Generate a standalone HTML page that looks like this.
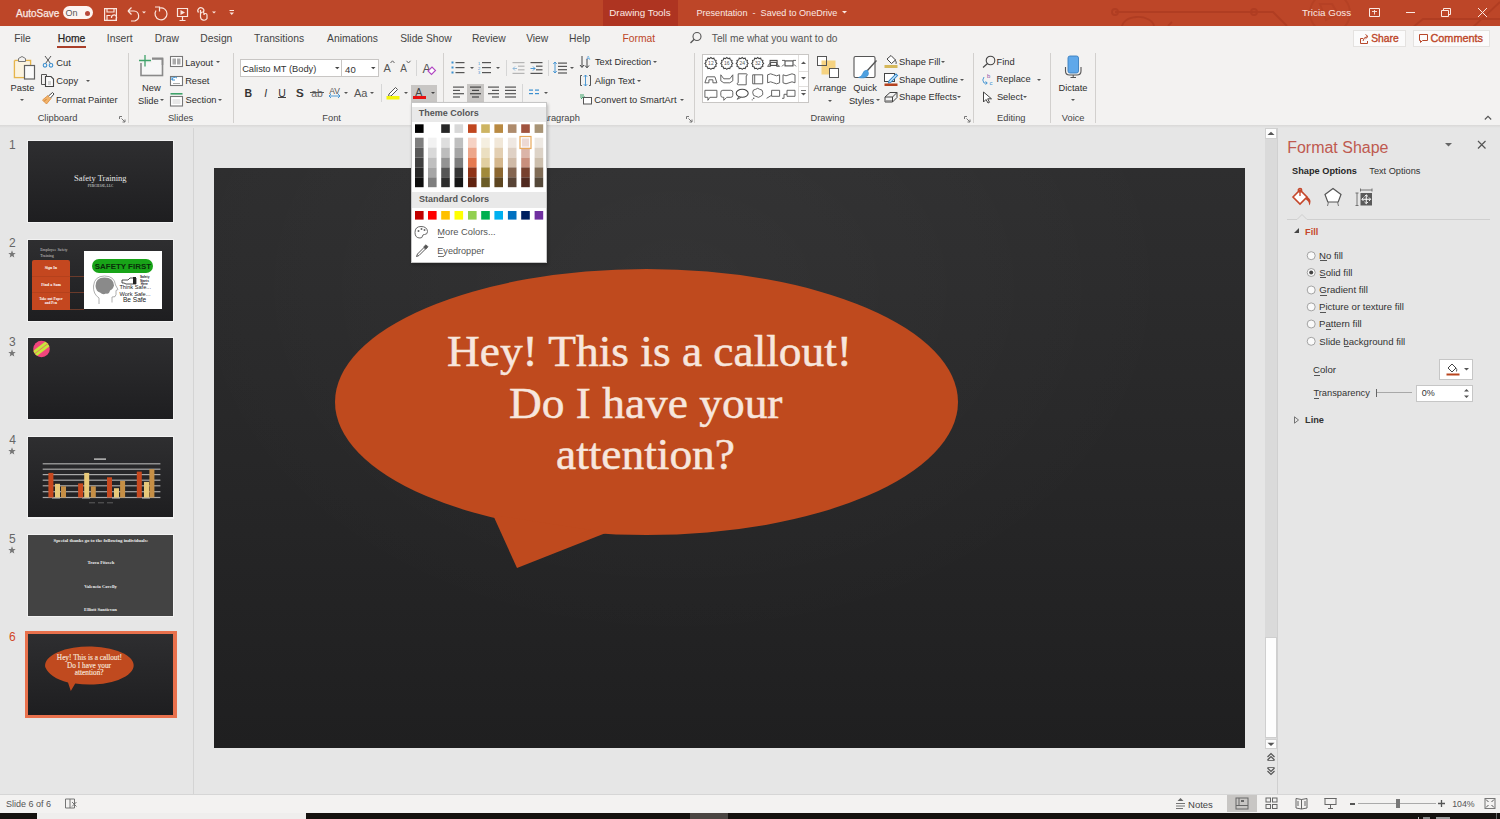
<!DOCTYPE html>
<html><head><meta charset="utf-8">
<style>
*{margin:0;padding:0;box-sizing:border-box}
html,body{width:1500px;height:819px;overflow:hidden;background:#e6e6e6;font-family:"Liberation Sans",sans-serif;color:#444}
.a{position:absolute}
.t{position:absolute;white-space:nowrap;line-height:1}
svg{overflow:visible}
</style></head><body>
<div class="a" style="left:0px;top:0px;width:1500px;height:26px;background:#bd4628;"></div>
<div class="a" style="left:0px;top:26px;width:1500px;height:99px;background:#f3f2f1;"></div>
<div class="a" style="left:0px;top:125px;width:1500px;height:3px;background:linear-gradient(#d9d8d7,#e6e6e6);"></div>
<svg class="a" style="left:1080px;top:0px;overflow:hidden" width="420" height="26" viewBox="0 0 420 26"><g stroke="#ab3a20" stroke-width="1.8" fill="none" opacity="0.7">
  <path d="M35 12 H193 L207 26"/><circle cx="35" cy="12" r="3"/><circle cx="174" cy="12" r="3"/>
  <path d="M42 28 a16 10 0 0 1 32 -2"/><path d="M88 26 L92 22"/>
  <circle cx="250" cy="13" r="20" opacity="0.6"/><path d="M240 4 L252 4 L258 14 L246 20 Z" opacity="0.5"/>
  <path d="M332 28 L343 19 H420"/><path d="M392 28 L420 2"/>
 </g></svg>
<div class="t" style="left:16.02px;top:8.74px;font-size:10.00px;color:#fbe9e3;-webkit-text-stroke:0.25px #fbe9e3;">AutoSave</div>
<div class="a" style="left:63px;top:6px;width:30px;height:13px;background:#fdf4f1;border-radius:7px;"></div>
<div class="t" style="left:65.58px;top:8.89px;font-size:9.00px;color:#555;">On</div>
<div class="a" style="left:84.5px;top:11px;width:5.0px;height:5px;background:#b8483a;border-radius:3px;"></div>
<svg class="a" style="left:100px;top:4px;" width="140" height="20" viewBox="0 0 140 20"><g stroke="#fbe6de" stroke-width="1.2" fill="none">
  <path d="M4.6 4.6 H16.4 V16.4 H4.6 Z"/><path d="M7 4.6 V8 H14 V4.6"/><path d="M7 16.4 V11.5 H10.5"/>
  <path d="M11.5 14 a2.6 2.6 0 1 1 4.2 1.6"/>
  <path d="M28 7 L31.5 3.5 M28 7 L31.5 10.5 M28 7 H34 a5 5 0 0 1 1 9.8 L31 17"/>
  <path d="M56 6.5 a6 6 0 1 0 3.5 -2.5"/><path d="M55 3 H59.5 V7.5"/>
  <path d="M77.5 4.5 H87.5 V12.5 H77.5 Z M82.5 12.5 V16.5 M79.5 16.5 H85.5"/>
  <path d="M98.5 8.5 a3 3 0 1 1 5 -0.5 M100.5 6 V13 M100.5 13 a3.5 3.5 0 0 0 6.5 1.5 V11 a1.5 1.5 0 0 0 -3 0 V9.5 a1.5 1.5 0 0 0 -3 0"/>
 </g>
 <path d="M80.5 6 L85 8.5 L80.5 11 Z" fill="#fbe6de"/>
 <path d="M42 7.5 H46 L44 9.5 Z M112 7.5 H116 L114 9.5 Z" fill="#fbe6de"/>
 <path d="M129.5 6.5 H134" stroke="#fbe6de" stroke-width="1"/><path d="M129.5 8.5 H134 L131.75 11 Z" fill="#fbe6de"/></svg>
<div class="a" style="left:603px;top:0px;width:75px;height:26px;background:#ae3421;"></div>
<div class="t" style="left:609.31px;top:8.01px;font-size:9.80px;color:#fbe9e3;">Drawing Tools</div>
<div class="t" style="left:696.42px;top:8.60px;font-size:9.10px;color:#fbe9e3;white-space:pre;">Presentation  -  Saved to OneDrive</div>
<svg class="a" style="left:841.5px;top:10.8px" width="5" height="3.0"><path d="M0 0 H5 L2.5 2.5 Z" fill="#fbe9e3"/></svg>
<div class="t" style="left:1301.98px;top:8.01px;font-size:9.80px;color:#fbe9e3;">Tricia Goss</div>
<svg class="a" style="left:1360px;top:0px;" width="140" height="26" viewBox="0 0 140 26"><g stroke="#fbe9e3" stroke-width="1" fill="none">
  <path d="M9.5 8.5 H19.5 V16.5 H9.5 Z"/><path d="M12 11.5 H17 M14.5 10 V14.5" stroke-width="0.9"/>
  <path d="M46 12.5 H55"/>
  <path d="M81.5 10.5 H88.5 V16.5 H81.5 Z M83.5 10.5 V8.5 H90.5 V14.5 H88.5"/>
  <path d="M118 8 L127 17 M127 8 L118 17"/>
 </g></svg>
<div class="t" style="left:14.20px;top:34.49px;font-size:10.30px;color:#444;">File</div>
<div class="t" style="left:106.84px;top:34.49px;font-size:10.30px;color:#444;">Insert</div>
<div class="t" style="left:154.81px;top:34.49px;font-size:10.30px;color:#444;">Draw</div>
<div class="t" style="left:200.31px;top:34.49px;font-size:10.30px;color:#444;">Design</div>
<div class="t" style="left:254.07px;top:34.49px;font-size:10.30px;color:#444;">Transitions</div>
<div class="t" style="left:327.06px;top:34.49px;font-size:10.30px;color:#444;">Animations</div>
<div class="t" style="left:400.19px;top:34.49px;font-size:10.30px;color:#444;">Slide Show</div>
<div class="t" style="left:471.90px;top:34.49px;font-size:10.30px;color:#444;">Review</div>
<div class="t" style="left:526.15px;top:34.49px;font-size:10.30px;color:#444;">View</div>
<div class="t" style="left:569.06px;top:34.49px;font-size:10.30px;color:#444;">Help</div>
<div class="t" style="left:57.77px;top:34.49px;font-size:10.30px;color:#262626;-webkit-text-stroke:0.25px #262626;">Home</div>
<div class="a" style="left:57px;top:46px;width:29px;height:2px;background:#a93f2a;"></div>
<div class="t" style="left:622.46px;top:34.49px;font-size:10.30px;color:#bd4628;">Format</div>
<svg class="a" style="left:689px;top:31px;" width="14" height="14" viewBox="0 0 14 14"><circle cx="8" cy="5.5" r="4" stroke="#555" fill="none" stroke-width="1.1"/><path d="M5.2 8.3 L1.5 12" stroke="#555" stroke-width="1.3"/></svg>
<div class="t" style="left:711.82px;top:34.37px;font-size:10.20px;color:#555;">Tell me what you want to do</div>
<div class="a" style="left:1353px;top:30px;width:53px;height:17px;background:#fbfbfb;border:1px solid #e4e2e0;"></div>
<svg class="a" style="left:1358px;top:32px;" width="13" height="14" viewBox="0 0 13 14"><path d="M5 6.5 H2.5 V11.5 H9.5 V9" stroke="#b7472a" fill="none"/><path d="M5 9 Q5.5 5 9.5 4.5 M7.5 2.5 L10 4.5 L7.5 6.8" stroke="#b7472a" fill="none"/></svg>
<div class="t" style="left:1371.24px;top:33.58px;font-size:10.31px;color:#bd4628;-webkit-text-stroke:0.35px #bd4628;">Share</div>
<div class="a" style="left:1413px;top:30px;width:77px;height:17px;background:#fbfbfb;border:1px solid #e4e2e0;"></div>
<svg class="a" style="left:1418px;top:33px;" width="12" height="12" viewBox="0 0 12 12"><path d="M1.5 1.5 H9.5 V7.5 H4.5 L2.5 9.5 V7.5 H1.5 Z" stroke="#b7472a" fill="none"/></svg>
<div class="t" style="left:1430.46px;top:33.09px;font-size:10.88px;color:#bd4628;-webkit-text-stroke:0.35px #bd4628;">Comments</div>
<div class="a" style="left:128px;top:53px;width:1px;height:70px;background:#d2d0ce;"></div>
<div class="a" style="left:233px;top:53px;width:1px;height:70px;background:#d2d0ce;"></div>
<div class="a" style="left:443px;top:53px;width:1px;height:70px;background:#d2d0ce;"></div>
<div class="a" style="left:694px;top:53px;width:1px;height:70px;background:#d2d0ce;"></div>
<div class="a" style="left:973px;top:53px;width:1px;height:70px;background:#d2d0ce;"></div>
<div class="a" style="left:1050px;top:53px;width:1px;height:70px;background:#d2d0ce;"></div>
<div class="a" style="left:1095px;top:53px;width:1px;height:70px;background:#d2d0ce;"></div>
<div class="t" style="left:37.67px;top:114.13px;font-size:9.30px;color:#454545;">Clipboard</div>
<div class="t" style="left:167.88px;top:114.13px;font-size:9.30px;color:#454545;">Slides</div>
<div class="t" style="left:322.35px;top:114.13px;font-size:9.30px;color:#454545;">Font</div>
<div class="t" style="left:810.49px;top:114.13px;font-size:9.30px;color:#454545;">Drawing</div>
<div class="t" style="left:997.07px;top:114.13px;font-size:9.30px;color:#454545;">Editing</div>
<div class="t" style="left:1061.79px;top:114.13px;font-size:9.30px;color:#454545;">Voice</div>
<div class="t" style="left:536.46px;top:114.13px;font-size:9.30px;color:#454545;">Paragraph</div>
<svg class="a" style="left:119px;top:116px;" width="7" height="7" viewBox="0 0 7 7"><path d="M0.5 0.5 H3 M0.5 0.5 V3 M2.5 2.5 L6 6 M6 3.5 V6 H3.5" stroke="#777" stroke-width="1" fill="none"/></svg>
<svg class="a" style="left:686px;top:116px;" width="7" height="7" viewBox="0 0 7 7"><path d="M0.5 0.5 H3 M0.5 0.5 V3 M2.5 2.5 L6 6 M6 3.5 V6 H3.5" stroke="#777" stroke-width="1" fill="none"/></svg>
<svg class="a" style="left:964px;top:116px;" width="7" height="7" viewBox="0 0 7 7"><path d="M0.5 0.5 H3 M0.5 0.5 V3 M2.5 2.5 L6 6 M6 3.5 V6 H3.5" stroke="#777" stroke-width="1" fill="none"/></svg>
<svg class="a" style="left:10px;top:54px;" width="28" height="28" viewBox="0 0 28 28"><path d="M4.5 6.5 H8 M16 6.5 H20.5 V12" stroke="#e6b54a" stroke-width="1.5" fill="none"/>
<path d="M4.5 6.5 V23.5 H14" stroke="#e6b54a" stroke-width="1.5" fill="none"/>
<rect x="5.3" y="7.3" width="14.4" height="15.5" fill="#fbf3df"/>
<path d="M8.5 7.5 V4.5 L12 2.5 L15.5 4.5 V7.5 Z" fill="#f3f2f1" stroke="#777" stroke-width="1"/>
<rect x="14.5" y="11.5" width="10" height="13.5" fill="#fafafa" stroke="#606060" stroke-width="1.2"/></svg>
<div class="t" style="left:10.58px;top:84.13px;font-size:9.30px;color:#2e2e2e;">Paste</div>
<svg class="a" style="left:20.3px;top:99.0px" width="4" height="2.5"><path d="M0 0 H4 L2.0 2.0 Z" fill="#555"/></svg>
<svg class="a" style="left:42px;top:55px;" width="12" height="13" viewBox="0 0 12 13"><path d="M3 1 L8.5 8.5 M9 1 L3.5 8.5" stroke="#555" stroke-width="1"/><circle cx="3" cy="10.3" r="1.8" stroke="#3a8fd0" fill="none" stroke-width="1.1"/><circle cx="9" cy="10.3" r="1.8" stroke="#3a8fd0" fill="none" stroke-width="1.1"/></svg>
<div class="t" style="left:56.33px;top:58.53px;font-size:9.30px;color:#2e2e2e;">Cut</div>
<svg class="a" style="left:40px;top:73px;" width="16" height="15" viewBox="0 0 16 15"><path d="M6.5 3.5 V1.5 H1.5 V11.5 H5" stroke="#555" fill="none" stroke-width="1"/><path d="M5.5 3.5 H11 L13.5 6 V13.5 H5.5 Z" stroke="#444" fill="#fafafa" stroke-width="1.1"/><path d="M8 9 H11 M8 11 H11" stroke="#999" stroke-width="0.8"/></svg>
<div class="t" style="left:56.33px;top:76.83px;font-size:9.30px;color:#2e2e2e;">Copy</div>
<svg class="a" style="left:86.0px;top:79.7px" width="4" height="2.5"><path d="M0 0 H4 L2.0 2.0 Z" fill="#555"/></svg>
<svg class="a" style="left:41px;top:92px;" width="14" height="13" viewBox="0 0 14 13"><path d="M1.5 8 L7 3.5 L10 6.5 L5.5 12 Z" fill="#f2b36a" stroke="#d9893a" stroke-width="0.8"/><path d="M7.5 4 L11.5 0.5 L13 2 L9.5 6" fill="#fff" stroke="#444" stroke-width="1"/><path d="M3 9.5 L5.5 7" stroke="#c06a1a" stroke-width="0.7"/></svg>
<div class="t" style="left:56.06px;top:95.83px;font-size:9.30px;color:#2e2e2e;">Format Painter</div>
<svg class="a" style="left:136px;top:53px;" width="30" height="25" viewBox="0 0 30 25"><rect x="5" y="6" width="21.5" height="16.5" fill="#f7f7f7" stroke="#8a8a8a" stroke-width="1.6"/>
<rect x="4" y="4" width="12" height="6" fill="#f3f2f1"/>
<path d="M9 2 V13.5 M3 7.5 H15" stroke="#3fa26a" stroke-width="1.3"/>
<path d="M16 5.2 H26.5 V12" stroke="#8a8a8a" stroke-width="1.6" fill="none"/></svg>
<div class="t" style="left:142.10px;top:84.13px;font-size:9.30px;color:#2e2e2e;">New</div>
<div class="t" style="left:137.98px;top:96.53px;font-size:9.30px;color:#2e2e2e;">Slide</div>
<svg class="a" style="left:160.2px;top:98.5px" width="4" height="2.5"><path d="M0 0 H4 L2.0 2.0 Z" fill="#555"/></svg>
<svg class="a" style="left:169px;top:55px;" width="15" height="13" viewBox="0 0 15 13"><rect x="1.5" y="1.5" width="12" height="10" fill="#fff" stroke="#777" stroke-width="1.1"/><rect x="3.5" y="3.5" width="3.5" height="6" fill="#aaa"/><rect x="8" y="3.5" width="3.5" height="6" fill="#aaa"/></svg>
<div class="t" style="left:185.16px;top:58.53px;font-size:9.30px;color:#2e2e2e;">Layout</div>
<svg class="a" style="left:216.2px;top:61.0px" width="4" height="2.5"><path d="M0 0 H4 L2.0 2.0 Z" fill="#555"/></svg>
<svg class="a" style="left:169px;top:74px;" width="15" height="12" viewBox="0 0 15 12"><rect x="1.5" y="2.5" width="12" height="9" fill="#fff" stroke="#777" stroke-width="1.1"/><path d="M3 6 a3 3 0 0 1 5 -2 M3 3 V6 H6" stroke="#3a8fd0" fill="none" stroke-width="1"/><path d="M4 9.5 H11" stroke="#aaa"/></svg>
<div class="t" style="left:185.16px;top:77.23px;font-size:9.30px;color:#2e2e2e;">Reset</div>
<svg class="a" style="left:169px;top:92px;" width="15" height="15" viewBox="0 0 15 15"><path d="M1.5 1.8 H13.5" stroke="#3fa26a" stroke-width="1.6"/><rect x="1.5" y="4.5" width="12" height="9.5" fill="#fff" stroke="#777" stroke-width="1.1"/><rect x="3.5" y="7" width="8" height="5" fill="#e8e8e8"/></svg>
<div class="t" style="left:185.48px;top:95.83px;font-size:9.30px;color:#2e2e2e;">Section</div>
<svg class="a" style="left:218.2px;top:98.5px" width="4" height="2.5"><path d="M0 0 H4 L2.0 2.0 Z" fill="#555"/></svg>
<div class="a" style="left:240px;top:59px;width:102px;height:18px;background:#fff;border:1px solid #c8c6c4;"></div>
<div class="a" style="left:341px;top:59px;width:38px;height:18px;background:#fff;border:1px solid #c8c6c4;"></div>
<div class="t" style="left:242.13px;top:64.73px;font-size:9.30px;color:#333;">Calisto MT (Body)</div>
<svg class="a" style="left:334.8px;top:67.2px" width="4.5" height="2.8"><path d="M0 0 H4.5 L2.25 2.25 Z" fill="#444"/></svg>
<div class="t" style="left:345.11px;top:64.56px;font-size:9.50px;color:#333;">40</div>
<svg class="a" style="left:370.8px;top:67.2px" width="4.5" height="2.8"><path d="M0 0 H4.5 L2.25 2.25 Z" fill="#444"/></svg>
<div class="t" style="left:383.54px;top:62.89px;font-size:11.00px;color:#555;">A</div>
<svg class="a" style="left:390px;top:60px;" width="6" height="4" viewBox="0 0 6 4"><path d="M0.5 3 L2.5 0.8 L4.5 3" stroke="#555" fill="none" stroke-width="0.9"/></svg>
<div class="t" style="left:400.28px;top:63.74px;font-size:10.00px;color:#555;">A</div>
<svg class="a" style="left:406px;top:60px;" width="6" height="4" viewBox="0 0 6 4"><path d="M0.5 0.8 L2.5 3 L4.5 0.8" stroke="#555" fill="none" stroke-width="0.9"/></svg>
<div class="a" style="left:416px;top:60px;width:1px;height:16px;background:#d6d6d6;"></div>
<div class="t" style="left:422.59px;top:62.72px;font-size:12.50px;color:#555;">A</div>
<svg class="a" style="left:427px;top:66px;" width="10" height="9" viewBox="0 0 10 9"><path d="M1 5 L5 1 L8.5 4.5 L4.5 8.5 Z" fill="#fff" stroke="#b146c2" stroke-width="1.1"/></svg>
<div class="t" style="left:244.49px;top:88.32px;font-size:10.50px;color:#333;font-weight:bold;">B</div>
<div class="t" style="left:264.21px;top:88.32px;font-size:10.50px;color:#333;font-style:italic;">I</div>
<div class="t" style="left:278.37px;top:88.32px;font-size:10.50px;color:#333;">U</div>
<div class="a" style="left:278px;top:97px;width:8px;height:1px;background:#444;"></div>
<div class="t" style="left:295.79px;top:87.89px;font-size:11.00px;color:#333;text-shadow:0.6px 0 0 #333;">S</div>
<div class="t" style="left:311.22px;top:88.32px;font-size:10.50px;color:#666;">ab</div>
<div class="a" style="left:310px;top:92px;width:14px;height:1px;background:#555;"></div>
<div class="t" style="left:329.17px;top:86.61px;font-size:8.50px;color:#555;">AV</div>
<svg class="a" style="left:328px;top:93px;" width="13" height="6" viewBox="0 0 13 6"><path d="M1 3 H12 M1 3 L3 1 M1 3 L3 5 M12 3 L10 1 M12 3 L10 5" stroke="#3a8fd0" fill="none" stroke-width="0.9"/></svg>
<svg class="a" style="left:344.0px;top:91.5px" width="4" height="2.5"><path d="M0 0 H4 L2.0 2.0 Z" fill="#555"/></svg>
<div class="t" style="left:354.04px;top:87.89px;font-size:11.00px;color:#555;">Aa</div>
<svg class="a" style="left:369.5px;top:91.5px" width="4" height="2.5"><path d="M0 0 H4 L2.0 2.0 Z" fill="#555"/></svg>
<div class="a" style="left:381px;top:84px;width:1px;height:18px;background:#d6d6d6;"></div>
<svg class="a" style="left:386px;top:85px;" width="14" height="15" viewBox="0 0 14 15"><path d="M3 9 L9.5 2.5 L11.5 4.5 L5 11 L2.5 11.5 Z" fill="#fff" stroke="#555" stroke-width="1"/><rect x="0.5" y="11" width="13" height="3.5" fill="#f5f50a"/></svg>
<svg class="a" style="left:404.0px;top:91.5px" width="4" height="2.5"><path d="M0 0 H4 L2.0 2.0 Z" fill="#555"/></svg>
<div class="a" style="left:411px;top:85px;width:26px;height:17px;background:#c8c6c4;"></div>
<div class="t" style="left:415.16px;top:86.92px;font-size:10.50px;color:#444;">A</div>
<div class="a" style="left:413px;top:96px;width:13px;height:3px;background:#e81010;"></div>
<svg class="a" style="left:431.0px;top:91.5px" width="4" height="2.5"><path d="M0 0 H4 L2.0 2.0 Z" fill="#444"/></svg>
<svg class="a" style="left:451px;top:61px;" width="14" height="13" viewBox="0 0 14 13"><rect x="0.5" y="0.5" width="2" height="2" fill="#3a8fd0"/><rect x="0.5" y="5.5" width="2" height="2" fill="#3a8fd0"/><rect x="0.5" y="10.5" width="2" height="2" fill="#3a8fd0"/><rect x="4.5" y="1" width="9.0" height="1.2" fill="#555"/><rect x="4.5" y="6" width="9.0" height="1.2" fill="#555"/><rect x="4.5" y="11" width="9.0" height="1.2" fill="#555"/></svg>
<svg class="a" style="left:469.5px;top:67.0px" width="4" height="2.5"><path d="M0 0 H4 L2.0 2.0 Z" fill="#555"/></svg>
<svg class="a" style="left:478px;top:61px;" width="14" height="13" viewBox="0 0 14 13"><text x="0" y="3.5" font-size="4" fill="#3a8fd0" font-family="Liberation Sans">1</text><text x="0" y="8.5" font-size="4" fill="#3a8fd0" font-family="Liberation Sans">2</text><text x="0" y="13" font-size="4" fill="#3a8fd0" font-family="Liberation Sans">3</text><rect x="4" y="1" width="9" height="1.2" fill="#555"/><rect x="4" y="6" width="9" height="1.2" fill="#555"/><rect x="4" y="11" width="9" height="1.2" fill="#555"/></svg>
<svg class="a" style="left:496.0px;top:67.0px" width="4" height="2.5"><path d="M0 0 H4 L2.0 2.0 Z" fill="#555"/></svg>
<div class="a" style="left:506px;top:60px;width:1px;height:16px;background:#d6d6d6;"></div>
<svg class="a" style="left:512px;top:61px;" width="13" height="13" viewBox="0 0 13 13"><rect x="0.5" y="1.0" width="12.0" height="1.2" fill="#b5b5b5"/><rect x="6" y="4.6" width="6.5" height="1.2" fill="#b5b5b5"/><rect x="6" y="8.2" width="6.5" height="1.2" fill="#b5b5b5"/><rect x="0.5" y="11.8" width="12.0" height="1.2" fill="#b5b5b5"/><path d="M1 7.5 H5 M1 7.5 L3 5.5 M1 7.5 L3 9.5" stroke="#8ab6d8" fill="none" stroke-width="0.9"/></svg>
<svg class="a" style="left:530px;top:61px;" width="13" height="13" viewBox="0 0 13 13"><rect x="0.5" y="1.0" width="12.0" height="1.2" fill="#555"/><rect x="6" y="4.6" width="6.5" height="1.2" fill="#555"/><rect x="6" y="8.2" width="6.5" height="1.2" fill="#555"/><rect x="0.5" y="11.8" width="12.0" height="1.2" fill="#555"/><path d="M0.5 7.5 H5 M5 7.5 L3 5.5 M5 7.5 L3 9.5" stroke="#3a8fd0" fill="none" stroke-width="0.9"/></svg>
<div class="a" style="left:548px;top:60px;width:1px;height:16px;background:#d6d6d6;"></div>
<svg class="a" style="left:553px;top:61px;" width="14" height="13" viewBox="0 0 14 13"><rect x="5" y="1.5" width="9" height="1.2" fill="#555"/><rect x="5" y="4.8" width="9" height="1.2" fill="#555"/><rect x="5" y="8.1" width="9" height="1.2" fill="#555"/><rect x="5" y="11.399999999999999" width="9" height="1.2" fill="#555"/><path d="M2 1 V12 M2 1 L0.3 3 M2 1 L3.7 3 M2 12 L0.3 10 M2 12 L3.7 10" stroke="#3a8fd0" fill="none" stroke-width="0.9"/></svg>
<svg class="a" style="left:569.7px;top:67.0px" width="4" height="2.5"><path d="M0 0 H4 L2.0 2.0 Z" fill="#555"/></svg>
<svg class="a" style="left:580px;top:55px;" width="13" height="14" viewBox="0 0 13 14"><path d="M2 1 V12 M0 10 L2 12.5 L4 10 M7 4 V12.5 M5 10.5 L7 12.8 L9 10.5" stroke="#444" fill="none" stroke-width="1"/><text x="6" y="5" font-size="6" fill="#3a8fd0" font-family="Liberation Sans">A</text></svg>
<div class="t" style="left:594.91px;top:58.43px;font-size:9.30px;color:#2e2e2e;">Text Direction</div>
<svg class="a" style="left:653.0px;top:61.0px" width="4" height="2.5"><path d="M0 0 H4 L2.0 2.0 Z" fill="#555"/></svg>
<svg class="a" style="left:579px;top:74px;" width="14" height="14" viewBox="0 0 14 14"><path d="M3 1.5 H1.5 V11.5 H3 M10 1.5 H11.5 V11.5 H10" stroke="#555" fill="none" stroke-width="1"/><path d="M6.5 1 V12 M4.8 2.8 L6.5 1 L8.2 2.8 M4.8 10.2 L6.5 12 L8.2 10.2" stroke="#3a8fd0" fill="none" stroke-width="0.9"/></svg>
<div class="t" style="left:594.80px;top:76.93px;font-size:9.30px;color:#2e2e2e;">Align Text</div>
<svg class="a" style="left:637.3px;top:79.5px" width="4" height="2.5"><path d="M0 0 H4 L2.0 2.0 Z" fill="#555"/></svg>
<svg class="a" style="left:579px;top:93px;" width="14" height="12" viewBox="0 0 14 12"><path d="M1 4 H6 M1 2 H5" stroke="#3fa26a" stroke-width="1"/><rect x="4.5" y="4.5" width="8" height="6.5" fill="#fff" stroke="#555" stroke-width="1"/><path d="M2 6 L4 4" stroke="#3fa26a"/></svg>
<div class="t" style="left:594.33px;top:95.93px;font-size:9.30px;color:#2e2e2e;">Convert to SmartArt</div>
<svg class="a" style="left:679.7px;top:98.5px" width="4" height="2.5"><path d="M0 0 H4 L2.0 2.0 Z" fill="#555"/></svg>
<svg class="a" style="left:453px;top:86px;" width="12" height="12" viewBox="0 0 12 12"><rect x="0" y="0.5" width="11" height="1.2" fill="#555"/><rect x="0" y="3.8" width="7" height="1.2" fill="#555"/><rect x="0" y="7.1" width="11" height="1.2" fill="#555"/><rect x="0" y="10.4" width="7" height="1.2" fill="#555"/></svg>
<div class="a" style="left:467px;top:84px;width:17px;height:18px;background:#c8c6c4;"></div>
<svg class="a" style="left:470px;top:86px;" width="12" height="12" viewBox="0 0 12 12"><rect x="0" y="0.5" width="11" height="1.2" fill="#444"/><rect x="2" y="3.8" width="7" height="1.2" fill="#444"/><rect x="0" y="7.1" width="11" height="1.2" fill="#444"/><rect x="2" y="10.4" width="7" height="1.2" fill="#444"/></svg>
<svg class="a" style="left:487.5px;top:86px;" width="12" height="12" viewBox="0 0 12 12"><rect x="0" y="0.5" width="11" height="1.2" fill="#555"/><rect x="4" y="3.8" width="7" height="1.2" fill="#555"/><rect x="0" y="7.1" width="11" height="1.2" fill="#555"/><rect x="4" y="10.4" width="7" height="1.2" fill="#555"/></svg>
<svg class="a" style="left:504.5px;top:86px;" width="12" height="12" viewBox="0 0 12 12"><rect x="0" y="0.5" width="11" height="1.2" fill="#555"/><rect x="0" y="3.8" width="11" height="1.2" fill="#555"/><rect x="0" y="7.1" width="11" height="1.2" fill="#555"/><rect x="0" y="10.4" width="11" height="1.2" fill="#555"/></svg>
<div class="a" style="left:522px;top:84px;width:1px;height:18px;background:#d6d6d6;"></div>
<svg class="a" style="left:529px;top:89px;" width="11" height="8" viewBox="0 0 11 8"><rect x="0" y="0.5" width="4" height="1.2" fill="#3a8fd0"/><rect x="0" y="4" width="4" height="1.2" fill="#3a8fd0"/><rect x="6" y="0.5" width="4" height="1.2" fill="#3a8fd0"/><rect x="6" y="4" width="4" height="1.2" fill="#3a8fd0"/></svg>
<svg class="a" style="left:543.7px;top:91.5px" width="4" height="2.5"><path d="M0 0 H4 L2.0 2.0 Z" fill="#555"/></svg>
<div class="a" style="left:702px;top:54px;width:107px;height:49px;background:#fff;border:1px solid #c8c6c4;"></div>
<div class="a" style="left:798px;top:55px;width:1px;height:47px;background:#e1dfdd;"></div>
<div class="a" style="left:799px;top:71px;width:9px;height:1px;background:#e1dfdd;"></div>
<div class="a" style="left:799px;top:86px;width:9px;height:1px;background:#e1dfdd;"></div>
<svg class="a" style="left:800px;top:60px;" width="7" height="40" viewBox="0 0 7 40"><path d="M1 4 L3.5 1.5 L6 4 Z" fill="#555"/><path d="M1 17 L3.5 19.5 L6 17 Z" fill="#555"/><path d="M1 30.5 H6" stroke="#555" stroke-width="0.8"/><path d="M1 33 L3.5 35.5 L6 33 Z" fill="#555"/></svg>
<svg class="a" style="left:700px;top:54px;" width="100" height="50" viewBox="0 0 100 50"><polygon points="16.9,9.4 15.7,10.7 16.1,12.4 14.4,12.9 13.9,14.6 12.2,14.2 10.9,15.4 9.6,14.2 7.9,14.6 7.4,12.9 5.7,12.4 6.1,10.7 4.9,9.4 6.1,8.1 5.7,6.4 7.4,5.9 7.9,4.2 9.6,4.6 10.9,3.4 12.2,4.6 13.9,4.2 14.4,5.9 16.1,6.4 15.7,8.1" fill="none" stroke="#444" stroke-width="1.05"/><text x="10.899999999999977" y="11.399999999999999" font-size="5" text-anchor="middle" fill="#555" font-family="Liberation Sans">12</text><polygon points="32.8,9.4 31.6,10.7 32.0,12.4 30.3,12.9 29.8,14.6 28.1,14.2 26.8,15.4 25.5,14.2 23.8,14.6 23.3,12.9 21.6,12.4 22.0,10.7 20.8,9.4 22.0,8.1 21.6,6.4 23.3,5.9 23.8,4.2 25.5,4.6 26.8,3.4 28.1,4.6 29.8,4.2 30.3,5.9 32.0,6.4 31.6,8.1" fill="none" stroke="#444" stroke-width="1.05"/><text x="26.799999999999955" y="11.399999999999999" font-size="5" text-anchor="middle" fill="#555" font-family="Liberation Sans">16</text><polygon points="48.2,9.4 47.0,10.7 47.4,12.4 45.7,12.9 45.2,14.6 43.5,14.2 42.2,15.4 40.9,14.2 39.2,14.6 38.7,12.9 37.0,12.4 37.4,10.7 36.2,9.4 37.4,8.1 37.0,6.4 38.7,5.9 39.2,4.2 40.9,4.6 42.2,3.4 43.5,4.6 45.2,4.2 45.7,5.9 47.4,6.4 47.0,8.1" fill="none" stroke="#444" stroke-width="1.05"/><text x="42.200000000000045" y="11.399999999999999" font-size="5" text-anchor="middle" fill="#555" font-family="Liberation Sans">24</text><polygon points="63.7,9.4 62.5,10.7 62.9,12.4 61.2,12.9 60.7,14.6 59.0,14.2 57.7,15.4 56.4,14.2 54.7,14.6 54.2,12.9 52.5,12.4 52.9,10.7 51.7,9.4 52.9,8.1 52.5,6.4 54.2,5.9 54.7,4.2 56.4,4.6 57.7,3.4 59.0,4.6 60.7,4.2 61.2,5.9 62.9,6.4 62.5,8.1" fill="none" stroke="#444" stroke-width="1.05"/><text x="57.700000000000045" y="11.399999999999999" font-size="5" text-anchor="middle" fill="#555" font-family="Liberation Sans">32</text><path d="M67.60000000000002 12.399999999999999 h3 v-4 h6 v4 h3 l-2 -2 M67.60000000000002 12.399999999999999 l2 -3 M70.60000000000002 8.399999999999999 h6" stroke="#555" fill="none" stroke-width="0.9"/><rect x="70.1" y="6.4" width="7" height="5" fill="none" stroke="#444" stroke-width="1.05"/><rect x="85.0" y="6.9" width="8" height="5" fill="none" stroke="#444" stroke-width="1.05"/><path d="M82 6.399999999999999 h3 M93 6.399999999999999 h3 M82 12.399999999999999 l2 -2 M96 12.399999999999999 l-2 -2" stroke="#555" fill="none" stroke-width="0.9"/><path d="M4.899999999999977 28.799999999999997 l2 -6 h8 l2 6 h-4 v-3 h-4 v3 Z" stroke="#555" fill="none" stroke-width="0.9"/><path d="M20.799999999999955 20.799999999999997 l3 4 h6 l3 -4 v6 l-3 2 h-6 l-3 -2 Z" stroke="#555" fill="none" stroke-width="0.9"/><path d="M38.200000000000045 19.799999999999997 h8 a1 1 0 0 1 0 2 v9 h-8 a1 1 0 0 1 0 -2 Z" stroke="#555" fill="none" stroke-width="0.9"/><path d="M52.700000000000045 20.799999999999997 h10 v9 h-10 Z M54.700000000000045 20.799999999999997 v9" stroke="#555" fill="none" stroke-width="0.9"/><path d="M67.60000000000002 20.799999999999997 q3 -2 6 0 q3 2 6 0 v8 q-3 2 -6 0 q-3 -2 -6 0 Z" stroke="#555" fill="none" stroke-width="0.9"/><path d="M83 20.799999999999997 q3 2 6 0 q3 -2 6 0 v8 q-3 -2 -6 0 q-3 2 -6 0 Z" stroke="#555" fill="none" stroke-width="0.9"/><path d="M4.899999999999977 36.3 h12 v7 h-7 l-2 3 v-3 h-3 Z" stroke="#555" fill="none" stroke-width="0.9"/><path d="M22.799999999999955 36.3 h8 q2 0 2 2 v3 q0 2 -2 2 h-4 l-3 3 v-3 h-1 q-2 0 -2 -2 v-3 q0 -2 2 -2 Z" stroke="#555" fill="none" stroke-width="0.9"/><ellipse cx="42.200000000000045" cy="39.3" rx="6" ry="4" fill="none" stroke="#444" stroke-width="1.05"/><path d="M39.200000000000045 42.3 l-2 3 l4 -2" stroke="#555" fill="none" stroke-width="0.9"/><path d="M52.700000000000045 38.3 q0 -3 3 -3 q2 -2 4 0 q3 0 3 3 q1 3 -2 4 q-2 2 -5 0 q-3 0 -3 -4 Z" stroke="#555" fill="none" stroke-width="0.9"/><circle cx="53.700000000000045" cy="44.3" r="0.8" fill="#555"/><circle cx="52.200000000000045" cy="45.8" r="0.6" fill="#555"/><path d="M71.60000000000002 36.3 h8 v6 h-8 Z M71.60000000000002 41.3 l-5 3" stroke="#555" fill="none" stroke-width="0.9"/><path d="M87 36.3 h8 v6 h-8 Z M87 40.3 h-3 v4 h-2" stroke="#555" fill="none" stroke-width="0.9"/></svg>
<svg class="a" style="left:816px;top:55px;" width="28" height="25" viewBox="0 0 28 25"><rect x="1.5" y="1.5" width="9" height="9" fill="#fff" stroke="#555" stroke-width="1"/><rect x="5.5" y="5.5" width="14" height="14" fill="#f6cf74" opacity="0.9"/><rect x="1.5" y="1.5" width="9" height="9" fill="none" stroke="#555" stroke-width="1"/><rect x="13.5" y="13.5" width="9" height="9" fill="#fff" stroke="#555" stroke-width="1"/></svg>
<div class="t" style="left:813.41px;top:84.33px;font-size:9.30px;color:#2e2e2e;">Arrange</div>
<svg class="a" style="left:828.0px;top:100.0px" width="4" height="2.5"><path d="M0 0 H4 L2.0 2.0 Z" fill="#555"/></svg>
<svg class="a" style="left:852px;top:55px;" width="28" height="27" viewBox="0 0 28 27"><rect x="2" y="1.5" width="21" height="21" rx="1.5" fill="#fff" stroke="#555" stroke-width="1.1"/><path d="M24.5 5.5 L15 16" stroke="#555" stroke-width="1.4"/><path d="M15.5 15 q-4 0 -5 4 q-1 3 -4 3.5 q6 1.5 9 -1.5 q2 -2 0 -6" fill="#4ea0e0" stroke="#3a8fd0" stroke-width="0.6"/></svg>
<div class="t" style="left:853.21px;top:84.33px;font-size:9.30px;color:#2e2e2e;">Quick</div>
<div class="t" style="left:848.93px;top:96.93px;font-size:9.30px;color:#2e2e2e;">Styles</div>
<svg class="a" style="left:875.6px;top:99.0px" width="4" height="2.5"><path d="M0 0 H4 L2.0 2.0 Z" fill="#555"/></svg>
<svg class="a" style="left:883px;top:54px;" width="16" height="15" viewBox="0 0 16 15"><path d="M4 5 L8 1.5 L12.5 6 L8.5 9.5 Z" fill="#fff" stroke="#444" stroke-width="1"/><path d="M12 6 q2 2 1 4" stroke="#444" fill="none" stroke-width="0.9"/><rect x="1.5" y="11" width="13" height="3" fill="#d6b85a"/></svg>
<div class="t" style="left:899.08px;top:58.23px;font-size:9.30px;color:#2e2e2e;">Shape Fill</div>
<svg class="a" style="left:941.0px;top:61.0px" width="4" height="2.5"><path d="M0 0 H4 L2.0 2.0 Z" fill="#555"/></svg>
<svg class="a" style="left:883px;top:72px;" width="16" height="15" viewBox="0 0 16 15"><rect x="1.5" y="1.5" width="10" height="8" fill="#fff" stroke="#444" stroke-width="1"/><path d="M6 9 L13 2 L14.5 3.5 L7.5 10.5 L5.5 11 Z" fill="#fff" stroke="#3a8fd0" stroke-width="1.1"/><rect x="1.5" y="11.5" width="13" height="2.5" fill="#b5421f"/></svg>
<div class="t" style="left:899.08px;top:75.63px;font-size:9.30px;color:#2e2e2e;">Shape Outline</div>
<svg class="a" style="left:959.5px;top:78.5px" width="4" height="2.5"><path d="M0 0 H4 L2.0 2.0 Z" fill="#555"/></svg>
<svg class="a" style="left:883px;top:91px;" width="16" height="13" viewBox="0 0 16 13"><path d="M2 6 L7 1.5 H14 L9.5 6 Z M2 6 V11 H9.5 L14 6.5 V1.5 M9.5 6 V11" fill="#f3f3f3" stroke="#444" stroke-width="1"/><path d="M2.5 10 H9" stroke="#888" stroke-width="1.5"/></svg>
<div class="t" style="left:899.08px;top:93.03px;font-size:9.30px;color:#2e2e2e;">Shape Effects</div>
<svg class="a" style="left:956.5px;top:95.5px" width="4" height="2.5"><path d="M0 0 H4 L2.0 2.0 Z" fill="#555"/></svg>
<svg class="a" style="left:982px;top:55px;" width="14" height="13" viewBox="0 0 14 13"><circle cx="8.5" cy="5.5" r="4.3" fill="none" stroke="#444" stroke-width="1.1"/><path d="M5.5 8.5 L1 12.5" stroke="#444" stroke-width="1.2"/></svg>
<div class="t" style="left:996.56px;top:57.63px;font-size:9.30px;color:#2e2e2e;">Find</div>
<svg class="a" style="left:981px;top:73px;" width="13" height="13" viewBox="0 0 13 13"><text x="6" y="5" font-size="6" fill="#8a4aa8" font-family="Liberation Sans">b</text><text x="8.5" y="12" font-size="6" fill="#3a8fd0" font-family="Liberation Sans">c</text><path d="M3 4 q-2.5 3 0 6 h3 M4.5 8.5 L6.3 10 L4.5 11.5" stroke="#3a8fd0" fill="none" stroke-width="0.9"/></svg>
<div class="t" style="left:996.56px;top:75.43px;font-size:9.30px;color:#2e2e2e;">Replace</div>
<svg class="a" style="left:1036.6px;top:78.5px" width="4" height="2.5"><path d="M0 0 H4 L2.0 2.0 Z" fill="#555"/></svg>
<svg class="a" style="left:982px;top:91px;" width="11" height="13" viewBox="0 0 11 13"><path d="M1.5 1 V11 L4 8.5 L6 12 L7.5 11.3 L5.7 7.8 H9.5 Z" fill="#fff" stroke="#444" stroke-width="1"/></svg>
<div class="t" style="left:996.88px;top:93.33px;font-size:9.30px;color:#2e2e2e;">Select</div>
<svg class="a" style="left:1023.4px;top:95.5px" width="4" height="2.5"><path d="M0 0 H4 L2.0 2.0 Z" fill="#555"/></svg>
<svg class="a" style="left:1063px;top:54px;" width="20" height="25" viewBox="0 0 20 25"><rect x="5" y="2" width="10.5" height="17" rx="2" fill="#5fa8ea" stroke="#3b7fc0" stroke-width="0.9"/><path d="M2.5 13 V17 q0 4 4 4 h7.5 q4 0 4 -4 V13" stroke="#555" fill="none" stroke-width="1.1"/><path d="M10.2 21 V23 M7.5 23.5 H13" stroke="#555" stroke-width="1"/></svg>
<div class="t" style="left:1058.60px;top:84.13px;font-size:9.30px;color:#2e2e2e;">Dictate</div>
<svg class="a" style="left:1071.0px;top:99.0px" width="4" height="2.5"><path d="M0 0 H4 L2.0 2.0 Z" fill="#555"/></svg>
<svg class="a" style="left:1484px;top:115px;" width="8" height="6" viewBox="0 0 8 6"><path d="M0.8 4.5 L4 1.3 L7.2 4.5" stroke="#555" fill="none" stroke-width="1.1"/></svg>
<div class="a" style="left:193px;top:128px;width:1px;height:667px;background:#d4d4d4;"></div>
<div class="a" style="left:27px;top:140px;width:147px;height:83px;background:#f2f2f2;"></div>
<div class="t" style="left:8.94px;top:138.85px;font-size:12.00px;color:#666;">1</div>
<div class="a" style="left:27px;top:239px;width:147px;height:83px;background:#f2f2f2;"></div>
<div class="t" style="left:9.12px;top:237.35px;font-size:12.00px;color:#666;">2</div>
<svg class="a" style="left:8px;top:250px;" width="8" height="8" viewBox="0 0 8 8"><path d="M4 0.3 L5 2.9 L7.7 3 L5.6 4.7 L6.3 7.5 L4 5.9 L1.7 7.5 L2.4 4.7 L0.3 3 L3 2.9 Z" fill="#777"/></svg>
<div class="a" style="left:27px;top:337px;width:147px;height:83px;background:#f2f2f2;"></div>
<div class="t" style="left:9.12px;top:335.85px;font-size:12.00px;color:#666;">3</div>
<svg class="a" style="left:8px;top:348.5px;" width="8" height="8" viewBox="0 0 8 8"><path d="M4 0.3 L5 2.9 L7.7 3 L5.6 4.7 L6.3 7.5 L4 5.9 L1.7 7.5 L2.4 4.7 L0.3 3 L3 2.9 Z" fill="#777"/></svg>
<div class="a" style="left:27px;top:436px;width:147px;height:83px;background:#f2f2f2;"></div>
<div class="t" style="left:9.15px;top:434.35px;font-size:12.00px;color:#666;">4</div>
<svg class="a" style="left:8px;top:447px;" width="8" height="8" viewBox="0 0 8 8"><path d="M4 0.3 L5 2.9 L7.7 3 L5.6 4.7 L6.3 7.5 L4 5.9 L1.7 7.5 L2.4 4.7 L0.3 3 L3 2.9 Z" fill="#777"/></svg>
<div class="a" style="left:27px;top:534px;width:147px;height:83px;background:#f2f2f2;"></div>
<div class="t" style="left:9.12px;top:532.85px;font-size:12.00px;color:#666;">5</div>
<svg class="a" style="left:8px;top:545.5px;" width="8" height="8" viewBox="0 0 8 8"><path d="M4 0.3 L5 2.9 L7.7 3 L5.6 4.7 L6.3 7.5 L4 5.9 L1.7 7.5 L2.4 4.7 L0.3 3 L3 2.9 Z" fill="#777"/></svg>
<div class="t" style="left:9.06px;top:631.35px;font-size:12.00px;color:#d24726;">6</div>
<div class="a" style="left:25px;top:631px;width:152px;height:87px;background:#e9714d;"></div>
<div class="a" style="left:28px;top:141px;width:145px;height:81px;background:linear-gradient(#2e2e30,#1e1e20);"></div>
<div class="t" style="left:73.98px;top:173.89px;font-size:8.50px;color:#e8e8e8;font-family:'Liberation Serif',serif;">Safety Training</div>
<div class="t" style="left:87.71px;top:184.82px;font-size:3.20px;color:#bbb;font-weight:bold;font-family:'Liberation Serif',serif;">PURCHASE, LLC</div>
<div class="a" style="left:28px;top:240px;width:145px;height:81px;background:linear-gradient(#2e2e30,#1e1e20);"></div>
<div class="t" style="left:40.18px;top:248.15px;font-size:4.00px;color:#ccc;font-family:'Liberation Serif',serif;">Employee Safety</div>
<div class="t" style="left:40.24px;top:254.15px;font-size:4.00px;color:#ccc;font-family:'Liberation Serif',serif;">Training</div>
<div class="a" style="left:32px;top:260px;width:38px;height:50px;background:#c4471f;border-radius:2px 2px 0 0;"></div>
<div class="a" style="left:32px;top:276px;width:38px;height:1px;background:#b5411c;"></div>
<div class="a" style="left:32px;top:292px;width:38px;height:1px;background:#b5411c;"></div>
<div class="a" style="left:70px;top:276px;width:14px;height:1px;background:#6a3a2a;"></div>
<div class="a" style="left:70px;top:292px;width:14px;height:1px;background:#6a3a2a;"></div>
<div class="a" style="left:70px;top:309px;width:14px;height:1px;background:#6a3a2a;"></div>
<div class="t" style="left:50.80px;top:266.15px;font-size:4.00px;color:#fff;font-weight:bold;font-family:'Liberation Serif',serif;transform:translateX(-50%);">Sign In</div>
<div class="t" style="left:50.94px;top:282.65px;font-size:4.00px;color:#fff;font-weight:bold;font-family:'Liberation Serif',serif;transform:translateX(-50%);">Find a Sam</div>
<div class="t" style="left:50.95px;top:297.99px;font-size:3.60px;color:#fff;font-weight:bold;font-family:'Liberation Serif',serif;transform:translateX(-50%);">Take out Paper</div>
<div class="t" style="left:50.89px;top:302.49px;font-size:3.60px;color:#fff;font-weight:bold;font-family:'Liberation Serif',serif;transform:translateX(-50%);">and Pen</div>
<div class="a" style="left:84px;top:251px;width:78px;height:58px;background:#fff;"></div>
<div class="a" style="left:92px;top:259px;width:61px;height:14px;background:#18a418;border-radius:7px;"></div>
<div class="t" style="left:94.76px;top:262.78px;font-size:7.94px;color:#0a2e0a;font-weight:bold;">SAFETY FIRST</div>
<svg class="a" style="left:92px;top:274px;" width="28" height="31" viewBox="0 0 28 31"><path d="M7 30 V24 q-6 -4 -5.5 -12 q1 -10 11 -10 q10 0 11 9 l2.5 4.5 l-2 1 v4 q0 3 -4 2.5 v5.5" fill="#fff" stroke="#999" stroke-width="0.8"/><path d="M3.5 12 q0 -8.5 9 -8.5 q9 0 9.5 8 q-1 4 -4 5 q-1 4 -4 3 q-3 2 -6 -1 q-4 -1 -4.5 -6.5 Z" fill="#8a8a8a"/></svg>
<svg class="a" style="left:121px;top:276px;" width="18" height="9" viewBox="0 0 18 9"><path d="M1 4 h6 l2 -2 h6 v6 h-10 l-2 -1 h-2 Z" fill="#fff" stroke="#222" stroke-width="0.8"/><rect x="12" y="1" width="3" height="7" fill="#222"/></svg>
<div class="t" style="left:139.90px;top:276.29px;font-size:3.20px;color:#222;font-weight:bold;">Safety</div>
<div class="t" style="left:139.90px;top:279.79px;font-size:3.20px;color:#222;font-weight:bold;">Starts</div>
<div class="t" style="left:140.79px;top:283.29px;font-size:3.20px;color:#222;font-weight:bold;">Here</div>
<div class="t" style="left:119.39px;top:285.23px;font-size:5.64px;color:#222;">Think Safe...</div>
<div class="t" style="left:119.47px;top:291.71px;font-size:5.66px;color:#222;">Work Safe...</div>
<div class="t" style="left:122.98px;top:297.46px;font-size:6.55px;color:#222;">Be Safe</div>
<div class="a" style="left:28px;top:338px;width:145px;height:81px;background:linear-gradient(#2e2e30,#1e1e20);"></div>
<svg class="a" style="left:32px;top:340px;" width="20" height="20" viewBox="0 0 20 20"><defs><clipPath id="bc"><circle cx="9.5" cy="9" r="8.3"/></clipPath></defs><circle cx="9.5" cy="9" r="8.3" fill="#f2457c"/><g clip-path="url(#bc)"><path d="M-1 12.5 L16 -0.5 L20 4.5 L3 17.5 Z" fill="#c8e63a"/><path d="M1 15 L18 2" stroke="#f2457c" stroke-width="0.7"/></g></svg>
<div class="a" style="left:28px;top:437px;width:145px;height:80px;background:linear-gradient(#2e2e30,#1e1e20);"></div>
<svg class="a" style="left:0px;top:437px;" width="180" height="82" viewBox="0 0 180 82"><rect x="42.7" y="26.2" width="117.7" height="1.2" fill="#a9a9a9"/><rect x="42.7" y="31.6" width="117.7" height="1.2" fill="#a9a9a9"/><rect x="42.7" y="37.0" width="117.7" height="1.2" fill="#a9a9a9"/><rect x="42.7" y="42.6" width="117.7" height="1.2" fill="#a9a9a9"/><rect x="42.7" y="48.2" width="117.7" height="1.2" fill="#a9a9a9"/><rect x="42.7" y="54.1" width="117.7" height="1.2" fill="#a9a9a9"/><rect x="42.7" y="59.9" width="117.7" height="1.2" fill="#a9a9a9"/><rect x="48.4" y="35.9" width="5" height="24.6" fill="#c8491f"/><rect x="55" y="46.8" width="5" height="13.7" fill="#e8c97a"/><rect x="61" y="49.3" width="5" height="11.2" fill="#c68f45"/><rect x="78.1" y="46.4" width="5" height="14.1" fill="#c8491f"/><rect x="84.2" y="35.9" width="5" height="24.6" fill="#e8c97a"/><rect x="90.8" y="49.3" width="5" height="11.2" fill="#c68f45"/><rect x="107" y="40.3" width="5" height="20.2" fill="#c8491f"/><rect x="114" y="51.2" width="5" height="9.3" fill="#e8c97a"/><rect x="120.1" y="43.9" width="5" height="16.6" fill="#c68f45"/><rect x="136.8" y="34.6" width="5" height="25.9" fill="#c8491f"/><rect x="144" y="44.9" width="5" height="15.6" fill="#e8c97a"/><rect x="149.4" y="32.2" width="5" height="28.3" fill="#c68f45"/><rect x="52" y="61" width="8" height="0.8" fill="#888"/><rect x="82" y="61" width="8" height="0.8" fill="#888"/><rect x="112" y="61" width="8" height="0.8" fill="#888"/><rect x="142" y="61" width="8" height="0.8" fill="#888"/><rect x="89" y="65.5" width="6" height="0.7" fill="#777"/><rect x="98" y="65.5" width="6" height="0.7" fill="#777"/><rect x="107" y="65.5" width="6" height="0.7" fill="#777"/><rect x="94" y="21.5" width="12" height="1.2" fill="#ddd"/></svg>
<div class="a" style="left:28px;top:535px;width:145px;height:81px;background:#434343;"></div>
<div class="t" style="left:53.46px;top:538.56px;font-size:4.83px;color:#eee;font-weight:bold;font-family:'Liberation Serif',serif;">Special thanks go to the following individuals:</div>
<div class="t" style="left:87.42px;top:561.45px;font-size:4.60px;color:#eee;font-weight:bold;font-family:'Liberation Serif',serif;">Trava Fitzsch</div>
<div class="t" style="left:84.17px;top:585.15px;font-size:4.60px;color:#eee;font-weight:bold;font-family:'Liberation Serif',serif;">Valencia Cavelly</div>
<div class="t" style="left:84.08px;top:608.35px;font-size:4.60px;color:#eee;font-weight:bold;font-family:'Liberation Serif',serif;">Elliott Santievan</div>
<div class="a" style="left:28px;top:634px;width:145px;height:81px;background:linear-gradient(#2e2e30,#1e1e20);"></div>
<svg class="a" style="left:28px;top:634px;" width="145" height="81" viewBox="0 0 145 81"><path d="M17.2 33 a44.3 19 0 1 1 30 16.5 L42.8 57 L40 48.5 Q22 44 17.2 33 Z" fill="#c04a1f"/></svg>
<div class="t" style="left:56.87px;top:654.39px;font-size:7.30px;color:#f7e3d9;font-family:'Liberation Serif',serif;-webkit-text-stroke:0.15px #f7e3d9;">Hey! This is a callout!</div>
<div class="t" style="left:67.07px;top:662.19px;font-size:7.30px;color:#f7e3d9;font-family:'Liberation Serif',serif;-webkit-text-stroke:0.15px #f7e3d9;">Do I have your</div>
<div class="t" style="left:74.82px;top:669.09px;font-size:7.30px;color:#f7e3d9;font-family:'Liberation Serif',serif;-webkit-text-stroke:0.15px #f7e3d9;">attention?</div>
<div class="a" style="left:214px;top:168px;width:1031px;height:580px;background:radial-gradient(ellipse 70% 90% at 45% 20%,rgba(255,255,255,0.035),rgba(255,255,255,0) 70%),linear-gradient(180deg,#2e2e2f 0%,#272728 50%,#1f1f20 100%);"></div>
<svg class="a" style="left:214px;top:168px;" width="1031" height="580" viewBox="0 0 1031 580"><path d="M303 293 L279.6 234 C130 200 121 150 121 234 C121 160 260 101.6 432.5 101.6 C605 101.6 744 161 744 234 C744 307 605 366 432.5 366 C380 366 345 362 303 293 Z" fill="none"/></svg>
<svg class="a" style="left:214px;top:168px;" width="1031" height="580" viewBox="0 0 1031 580"><ellipse cx="432.5" cy="234" rx="311.5" ry="133" fill="#bf4a1e"/>
<path d="M279 347 L303 400 L393 364.5 Z" fill="#bf4a1e"/></svg>
<div class="t" style="left:447.09px;top:330.11px;font-size:43.60px;color:#f7e6dd;font-family:'Liberation Serif',serif;-webkit-text-stroke:0.5px #f7e6dd;transform:scaleX(1.041);transform-origin:0 0;">Hey! This is a callout!</div>
<div class="t" style="left:508.69px;top:381.61px;font-size:43.60px;color:#f7e6dd;font-family:'Liberation Serif',serif;-webkit-text-stroke:0.5px #f7e6dd;transform:scaleX(1.041);transform-origin:0 0;">Do I have your</div>
<div class="t" style="left:556.07px;top:433.21px;font-size:43.60px;color:#f7e6dd;font-family:'Liberation Serif',serif;-webkit-text-stroke:0.5px #f7e6dd;transform:scaleX(1.041);transform-origin:0 0;">attention?</div>
<div class="a" style="left:1265px;top:128px;width:12px;height:621px;background:#dadada;"></div>
<div class="a" style="left:1265px;top:128px;width:12px;height:11px;background:#fdfdfd;border:1px solid #d0d0d0;"></div>
<svg class="a" style="left:1267px;top:131px;" width="8" height="5" viewBox="0 0 8 5"><path d="M0.5 4 L4 0.8 L7.5 4 Z" fill="#555"/></svg>
<div class="a" style="left:1265px;top:637px;width:12px;height:101px;background:#fdfdfd;border:1px solid #cfcfcf;"></div>
<div class="a" style="left:1265px;top:739px;width:12px;height:10px;background:#fdfdfd;border:1px solid #d0d0d0;"></div>
<svg class="a" style="left:1267px;top:742px;" width="8" height="5" viewBox="0 0 8 5"><path d="M0.5 0.8 L4 4 L7.5 0.8 Z" fill="#555"/></svg>
<svg class="a" style="left:1266px;top:752px;" width="10" height="24" viewBox="0 0 10 24"><path d="M1.5 5 L5 1.5 L8.5 5 M1.5 8 L5 4.5 L8.5 8" stroke="#555" fill="none" stroke-width="1.2"/><path d="M1.5 16 L5 19.5 L8.5 16 M1.5 19 L5 22.5 L8.5 19" stroke="#555" fill="none" stroke-width="1.2"/><path d="M1.5 8.5 H8.5 M1.5 15.5 H8.5" stroke="#555" stroke-width="0.8"/></svg>
<div class="a" style="left:1277px;top:128px;width:1px;height:667px;background:#d0d0d0;"></div>
<div class="a" style="left:411px;top:102px;width:136px;height:161px;background:#fff;border:1px solid #c6c6c6;box-shadow:1px 2px 3px rgba(0,0,0,0.25);"></div>
<div class="a" style="left:412px;top:107px;width:134px;height:15px;background:#e9e9e9;"></div>
<div class="t" style="left:418.74px;top:108.99px;font-size:9.00px;color:#555;font-weight:bold;">Theme Colors</div>
<svg class="a" style="left:411px;top:102px;" width="136" height="160" viewBox="0 0 136 160"><rect x="4.0" y="22.3" width="8.6" height="8.6" fill="#000000"/><rect x="4.0" y="35.7" width="8.6" height="9.9" fill="#7f7f7f"/><rect x="4.0" y="45.6" width="8.6" height="9.9" fill="#595959"/><rect x="4.0" y="55.5" width="8.6" height="9.9" fill="#3f3f3f"/><rect x="4.0" y="65.4" width="8.6" height="9.9" fill="#262626"/><rect x="4.0" y="75.3" width="8.6" height="9.9" fill="#0d0d0d"/><rect x="4.0" y="109" width="8.6" height="8.6" fill="#c00000"/><rect x="17.0" y="22.3" width="8.6" height="8.6" fill="#ffffff"/><rect x="17.0" y="35.7" width="8.6" height="9.9" fill="#f2f2f2"/><rect x="17.0" y="45.6" width="8.6" height="9.9" fill="#d9d9d9"/><rect x="17.0" y="55.5" width="8.6" height="9.9" fill="#bfbfbf"/><rect x="17.0" y="65.4" width="8.6" height="9.9" fill="#a6a6a6"/><rect x="17.0" y="75.3" width="8.6" height="9.9" fill="#7f7f7f"/><rect x="17.0" y="109" width="8.6" height="8.6" fill="#ff0000"/><rect x="30.2" y="22.3" width="8.6" height="8.6" fill="#262626"/><rect x="30.2" y="35.7" width="8.6" height="9.9" fill="#dedede"/><rect x="30.2" y="45.6" width="8.6" height="9.9" fill="#bdbdbd"/><rect x="30.2" y="55.5" width="8.6" height="9.9" fill="#939393"/><rect x="30.2" y="65.4" width="8.6" height="9.9" fill="#555555"/><rect x="30.2" y="75.3" width="8.6" height="9.9" fill="#2d2d2d"/><rect x="30.2" y="109" width="8.6" height="8.6" fill="#ffc000"/><rect x="43.5" y="22.3" width="8.6" height="8.6" fill="#d8d8d8"/><rect x="43.5" y="35.7" width="8.6" height="9.9" fill="#bfbfbf"/><rect x="43.5" y="45.6" width="8.6" height="9.9" fill="#a5a5a5"/><rect x="43.5" y="55.5" width="8.6" height="9.9" fill="#7d7d7d"/><rect x="43.5" y="65.4" width="8.6" height="9.9" fill="#353535"/><rect x="43.5" y="75.3" width="8.6" height="9.9" fill="#161616"/><rect x="43.5" y="109" width="8.6" height="8.6" fill="#ffff00"/><rect x="57.0" y="22.3" width="8.6" height="8.6" fill="#c0461f"/><rect x="57.0" y="35.7" width="8.6" height="9.9" fill="#f6d2c4"/><rect x="57.0" y="45.6" width="8.6" height="9.9" fill="#eda68a"/><rect x="57.0" y="55.5" width="8.6" height="9.9" fill="#e57a51"/><rect x="57.0" y="65.4" width="8.6" height="9.9" fill="#903317"/><rect x="57.0" y="75.3" width="8.6" height="9.9" fill="#60220f"/><rect x="57.0" y="109" width="8.6" height="8.6" fill="#92d050"/><rect x="70.2" y="22.3" width="8.6" height="8.6" fill="#cdb462"/><rect x="70.2" y="35.7" width="8.6" height="9.9" fill="#f5efe0"/><rect x="70.2" y="45.6" width="8.6" height="9.9" fill="#ebdfc1"/><rect x="70.2" y="55.5" width="8.6" height="9.9" fill="#e1cfa1"/><rect x="70.2" y="65.4" width="8.6" height="9.9" fill="#a18a3a"/><rect x="70.2" y="75.3" width="8.6" height="9.9" fill="#6b5c26"/><rect x="70.2" y="109" width="8.6" height="8.6" fill="#00b050"/><rect x="83.4" y="22.3" width="8.6" height="8.6" fill="#b98a42"/><rect x="83.4" y="35.7" width="8.6" height="9.9" fill="#f1e7d8"/><rect x="83.4" y="45.6" width="8.6" height="9.9" fill="#e3cfb2"/><rect x="83.4" y="55.5" width="8.6" height="9.9" fill="#d5b78c"/><rect x="83.4" y="65.4" width="8.6" height="9.9" fill="#8c6730"/><rect x="83.4" y="75.3" width="8.6" height="9.9" fill="#5d4520"/><rect x="83.4" y="109" width="8.6" height="8.6" fill="#00b0f0"/><rect x="96.9" y="22.3" width="8.6" height="8.6" fill="#ae8b6c"/><rect x="96.9" y="35.7" width="8.6" height="9.9" fill="#efe8e2"/><rect x="96.9" y="45.6" width="8.6" height="9.9" fill="#dfd1c5"/><rect x="96.9" y="55.5" width="8.6" height="9.9" fill="#cfbaa7"/><rect x="96.9" y="65.4" width="8.6" height="9.9" fill="#846651"/><rect x="96.9" y="75.3" width="8.6" height="9.9" fill="#584436"/><rect x="96.9" y="109" width="8.6" height="8.6" fill="#0070c0"/><rect x="110.2" y="22.3" width="8.6" height="8.6" fill="#a0533e"/><rect x="110.2" y="35.7" width="8.6" height="9.9" fill="#edd9d3"/><rect x="110.2" y="45.6" width="8.6" height="9.9" fill="#dbb4a8"/><rect x="110.2" y="55.5" width="8.6" height="9.9" fill="#c98f7d"/><rect x="110.2" y="65.4" width="8.6" height="9.9" fill="#77402e"/><rect x="110.2" y="75.3" width="8.6" height="9.9" fill="#50291f"/><rect x="110.2" y="109" width="8.6" height="8.6" fill="#002060"/><rect x="123.6" y="22.3" width="8.6" height="8.6" fill="#a89476"/><rect x="123.6" y="35.7" width="8.6" height="9.9" fill="#eee9e3"/><rect x="123.6" y="45.6" width="8.6" height="9.9" fill="#ddd3c7"/><rect x="123.6" y="55.5" width="8.6" height="9.9" fill="#ccbeac"/><rect x="123.6" y="65.4" width="8.6" height="9.9" fill="#806c56"/><rect x="123.6" y="75.3" width="8.6" height="9.9" fill="#554839"/><rect x="123.6" y="109" width="8.6" height="8.6" fill="#7030a0"/><rect x="109.0" y="34.5" width="11" height="12" fill="none" stroke="#e8a85a" stroke-width="1.2"/><rect x="110.5" y="36" width="8" height="9" fill="none" stroke="#fff" stroke-width="0.8"/></svg>
<div class="a" style="left:412px;top:192px;width:134px;height:16px;background:#e9e9e9;"></div>
<div class="t" style="left:418.93px;top:195.39px;font-size:9.00px;color:#555;font-weight:bold;">Standard Colors</div>
<svg class="a" style="left:414px;top:225px;" width="15" height="14" viewBox="0 0 15 14"><path d="M7 1.5 q6 0 6.5 5 q0 3 -3 3 q-2 0 -2 1.5 q0 2 -2.5 2 q-5 0 -5 -5.5 q0 -6 6 -6 Z" fill="none" stroke="#666" stroke-width="1"/><circle cx="4.5" cy="6" r="1" fill="#666"/><circle cx="7.5" cy="4" r="1" fill="#666"/><circle cx="10.5" cy="5" r="1" fill="#666"/></svg>
<div class="t" style="left:437.26px;top:228.13px;font-size:9.30px;color:#555;">More Colors...</div>
<div class="a" style="left:438px;top:237px;width:6px;height:1px;background:#777;"></div>
<svg class="a" style="left:415px;top:244px;" width="14" height="14" viewBox="0 0 14 14"><path d="M1.5 12.5 L2.5 10 L9 3.5 L10.5 5 L4 11.5 Z" fill="#fff" stroke="#555" stroke-width="1"/><path d="M8.5 3 L11 0.8 L13 2.8 L10.8 5.3" fill="#555" stroke="#555" stroke-width="0.8"/></svg>
<div class="t" style="left:437.27px;top:247.10px;font-size:9.10px;color:#555;">Eyedropper</div>
<div class="a" style="left:438px;top:256px;width:6px;height:1px;background:#777;"></div>
<div class="t" style="left:1287.22px;top:139.68px;font-size:15.98px;color:#bf5a50;">Format Shape</div>
<svg class="a" style="left:1445.3px;top:142.8px" width="7" height="4.0"><path d="M0 0 H7 L3.5 3.5 Z" fill="#666"/></svg>
<svg class="a" style="left:1477px;top:140px;" width="10" height="10" viewBox="0 0 10 10"><path d="M1 1 L8.5 8.5 M8.5 1 L1 8.5" stroke="#555" stroke-width="1.2"/></svg>
<div class="t" style="left:1292.12px;top:166.92px;font-size:9.20px;color:#262626;font-weight:bold;">Shape Options</div>
<div class="t" style="left:1369.32px;top:166.92px;font-size:9.20px;color:#333;">Text Options</div>
<svg class="a" style="left:1290px;top:187px;" width="24" height="22" viewBox="0 0 24 22"><path d="M3 10 L10 3 L17 10 L10 17 Z" fill="#fff" stroke="#c5472b" stroke-width="1.6"/><circle cx="10" cy="3.2" r="1.8" fill="none" stroke="#c5472b" stroke-width="1.3"/><path d="M10 5 V9" stroke="#c5472b" stroke-width="1.3"/><path d="M16.5 9.5 q4 2 4 5 q0 3 -1.5 4 q0.5 -4 -3 -6" fill="#c5472b"/></svg>
<svg class="a" style="left:1323px;top:187px;" width="20" height="21" viewBox="0 0 20 21"><path d="M10 1.5 L18 7.5 L15.2 15 H4.8 L2 7.5 Z" fill="#fff" stroke="#555" stroke-width="1.2"/><path d="M5.5 15 L4.5 19 M14.5 15 L15.5 19" stroke="#777" stroke-width="1"/></svg>
<svg class="a" style="left:1355px;top:188px;" width="20" height="20" viewBox="0 0 20 20"><path d="M5.5 2 H17 M5.5 0.5 V3.5 M17 0.5 V3.5" stroke="#666" stroke-width="0.9"/><path d="M2 5 V17.5 M0.5 5 H3.5 M0.5 17.5 H3.5" stroke="#666" stroke-width="0.9"/><rect x="5.5" y="5" width="11.5" height="12.5" fill="#5a5a5a"/><path d="M11.25 7 V15.5 M7 11.25 H15.5" stroke="#fff" stroke-width="1"/><path d="M9.5 8.5 L11.25 6.8 L13 8.5 M9.5 14 L11.25 15.7 L13 14 M8.5 9.5 L6.8 11.25 L8.5 13 M14 9.5 L15.7 11.25 L14 13" stroke="#fff" fill="none" stroke-width="0.9"/></svg>
<svg class="a" style="left:1287px;top:212px;" width="203" height="10" viewBox="0 0 203 10"><path d="M0 7.5 H10 L15 2.5 L20 7.5 H203" stroke="#cfcfcf" fill="none" stroke-width="1"/></svg>
<svg class="a" style="left:1293px;top:227px;" width="7" height="7" viewBox="0 0 7 7"><path d="M6 1 V6 H1 Z" fill="#444"/></svg>
<div class="t" style="left:1305.10px;top:228.22px;font-size:9.20px;color:#c5472b;font-weight:bold;">Fill</div>
<svg class="a" style="left:1306px;top:250px;" width="11" height="11" viewBox="0 0 11 11"><circle cx="5.2" cy="5.7" r="4" fill="#fafafa" stroke="#9a9a9a" stroke-width="0.9"/></svg>
<div class="t" style="left:1319.03px;top:251.08px;font-size:9.60px;color:#333;">No fill</div>
<div class="a" style="left:1319.8px;top:260.3px;width:6.900000000000091px;height:0.8999999999999773px;background:#555;"></div>
<svg class="a" style="left:1306px;top:267px;" width="11" height="11" viewBox="0 0 11 11"><circle cx="5.2" cy="5.5" r="4" fill="#fafafa" stroke="#9a9a9a" stroke-width="0.9"/><circle cx="5.2" cy="5.5" r="2" fill="#444"/></svg>
<div class="t" style="left:1319.37px;top:267.88px;font-size:9.60px;color:#333;">Solid fill</div>
<div class="a" style="left:1319.8px;top:277.1px;width:6.400000000000091px;height:0.8999999999999773px;background:#555;"></div>
<svg class="a" style="left:1306px;top:285px;" width="11" height="11" viewBox="0 0 11 11"><circle cx="5.2" cy="5.0" r="4" fill="#fafafa" stroke="#9a9a9a" stroke-width="0.9"/></svg>
<div class="t" style="left:1319.32px;top:285.38px;font-size:9.60px;color:#333;">Gradient fill</div>
<div class="a" style="left:1319.8px;top:294.6px;width:7.5px;height:0.8999999999999773px;background:#555;"></div>
<svg class="a" style="left:1306px;top:301px;" width="11" height="11" viewBox="0 0 11 11"><circle cx="5.2" cy="5.9" r="4" fill="#fafafa" stroke="#9a9a9a" stroke-width="0.9"/></svg>
<div class="t" style="left:1319.03px;top:302.28px;font-size:9.60px;color:#333;">Picture or texture fill</div>
<div class="a" style="left:1319.8px;top:311.5px;width:6.400000000000091px;height:0.8999999999999773px;background:#555;"></div>
<svg class="a" style="left:1306px;top:319px;" width="11" height="11" viewBox="0 0 11 11"><circle cx="5.2" cy="5.0" r="4" fill="#fafafa" stroke="#9a9a9a" stroke-width="0.9"/></svg>
<div class="t" style="left:1319.03px;top:319.38px;font-size:9.60px;color:#333;">Pattern fill</div>
<div class="a" style="left:1326.2px;top:328.6px;width:5.2999999999999545px;height:0.8999999999999773px;background:#555;"></div>
<svg class="a" style="left:1306px;top:336px;" width="11" height="11" viewBox="0 0 11 11"><circle cx="5.2" cy="5.3" r="4" fill="#fafafa" stroke="#9a9a9a" stroke-width="0.9"/></svg>
<div class="t" style="left:1319.37px;top:336.68px;font-size:9.60px;color:#333;">Slide background fill</div>
<div class="a" style="left:1343.8px;top:345.9px;width:5.400000000000091px;height:0.9000000000000341px;background:#555;"></div>
<div class="t" style="left:1313.12px;top:365.18px;font-size:9.60px;color:#333;">Color</div>
<div class="a" style="left:1313.6px;top:374.5px;width:6.900000000000091px;height:0.8999999999999773px;background:#555;"></div>
<div class="a" style="left:1439px;top:359px;width:34px;height:21px;background:#fff;border:1px solid #c6c6c6;"></div>
<svg class="a" style="left:1445px;top:362px;" width="16" height="15" viewBox="0 0 16 15"><path d="M3 6 L7 2 L11 6 L7 10 Z" fill="#fff" stroke="#444" stroke-width="1"/><path d="M10.5 5.5 q2 2 1 4" stroke="#444" fill="none" stroke-width="0.9"/><rect x="1.5" y="11.5" width="13" height="2" fill="#b9461f"/></svg>
<svg class="a" style="left:1464.0px;top:367.8px" width="5" height="3.0"><path d="M0 0 H5 L2.5 2.5 Z" fill="#555"/></svg>
<div class="t" style="left:1313.41px;top:388.93px;font-size:9.30px;color:#333;">Transparency</div>
<div class="a" style="left:1313.6px;top:398px;width:5.800000000000182px;height:0.8999999999999773px;background:#555;"></div>
<div class="a" style="left:1376px;top:389px;width:1px;height:8px;background:#666;"></div>
<div class="a" style="left:1377px;top:392px;width:35px;height:1px;background:#a8a8a8;"></div>
<div class="a" style="left:1416px;top:385px;width:57px;height:17px;background:#fff;border:1px solid #c6c6c6;"></div>
<div class="t" style="left:1421.84px;top:388.79px;font-size:9.00px;color:#333;">0%</div>
<svg class="a" style="left:1463px;top:387px;" width="7" height="13" viewBox="0 0 7 13"><path d="M1 4.5 L3.5 2 L6 4.5 Z M1 8.5 L3.5 11 L6 8.5 Z" fill="#555"/></svg>
<svg class="a" style="left:1293px;top:416px;" width="7" height="8" viewBox="0 0 7 8"><path d="M1.5 0.8 L5.5 4 L1.5 7.2 Z" fill="none" stroke="#666" stroke-width="0.9"/></svg>
<div class="t" style="left:1305.10px;top:416.22px;font-size:9.20px;color:#333;font-weight:bold;">Line</div>
<div class="a" style="left:0px;top:795px;width:1500px;height:18px;background:#f3f2f1;"></div>
<div class="a" style="left:0px;top:794px;width:1500px;height:1px;background:#d6d6d6;"></div>
<div class="t" style="left:5.98px;top:799.89px;font-size:9.00px;color:#555;">Slide 6 of 6</div>
<svg class="a" style="left:64px;top:797px;" width="14" height="13" viewBox="0 0 14 13"><path d="M1.5 2 H6 V11 H1.5 Z M6 2 H10.5 V11 H6" fill="none" stroke="#666" stroke-width="0.9"/><path d="M8 5 L12.5 9.5 M12.5 5 L8 9.5" stroke="#666" stroke-width="0.9"/></svg>
<svg class="a" style="left:1175px;top:797px;" width="11" height="13" viewBox="0 0 11 13"><path d="M5.5 1 L2.5 4 H8.5 Z" fill="#666"/><path d="M1 6.5 H10 M1 9 H10 M1 11.5 H8" stroke="#666" stroke-width="0.9"/></svg>
<div class="t" style="left:1188.04px;top:799.76px;font-size:9.50px;color:#444;">Notes</div>
<div class="a" style="left:1227px;top:795px;width:30px;height:17px;background:#c8c6c4;"></div>
<svg class="a" style="left:1235px;top:797px;" width="14" height="13" viewBox="0 0 14 13"><rect x="1" y="1" width="12" height="11" fill="none" stroke="#666" stroke-width="1"/><path d="M1 8.5 H13 M4 1 V8.5" stroke="#666" stroke-width="1"/><rect x="6" y="3" width="3" height="2" fill="#666"/></svg>
<svg class="a" style="left:1265px;top:797px;" width="13" height="13" viewBox="0 0 13 13"><rect x="1" y="1" width="4.5" height="4" fill="none" stroke="#666" stroke-width="1"/><rect x="7.5" y="1" width="4.5" height="4" fill="none" stroke="#666" stroke-width="1"/><rect x="1" y="7.5" width="4.5" height="4" fill="none" stroke="#666" stroke-width="1"/><rect x="7.5" y="7.5" width="4.5" height="4" fill="none" stroke="#666" stroke-width="1"/></svg>
<svg class="a" style="left:1295px;top:797px;" width="13" height="13" viewBox="0 0 13 13"><path d="M1 1.5 L6.5 2.5 V12 L1 11 Z M12 1.5 L6.5 2.5 V12 L12 11 Z M3 4 V9 M10 4 V9" fill="none" stroke="#666" stroke-width="1"/></svg>
<svg class="a" style="left:1324px;top:797px;" width="13" height="13" viewBox="0 0 13 13"><rect x="1" y="1.5" width="11" height="6" fill="none" stroke="#666" stroke-width="1"/><path d="M0.5 1.5 H12.5 M6.5 7.5 V11 M4 11.5 H9" stroke="#666" stroke-width="1"/></svg>
<div class="a" style="left:1350px;top:803px;width:5px;height:1.5px;background:#555;"></div>
<div class="a" style="left:1358px;top:803px;width:78px;height:1px;background:#aaa;"></div>
<div class="a" style="left:1396px;top:799px;width:4px;height:9px;background:#777;"></div>
<svg class="a" style="left:1438px;top:799px;" width="7" height="9" viewBox="0 0 7 9"><path d="M3.5 1 V8 M0 4.5 H7" stroke="#555" stroke-width="1.3"/></svg>
<div class="t" style="left:1452.16px;top:800.36px;font-size:8.80px;color:#555;">104%</div>
<svg class="a" style="left:1484px;top:797px;" width="12" height="13" viewBox="0 0 12 13"><rect x="1" y="1.5" width="10" height="10" fill="none" stroke="#777" stroke-width="1"/><path d="M2 2.5 L4.5 5 M10 2.5 L7.5 5 M2 10.5 L4.5 8 M10 10.5 L7.5 8" stroke="#555" stroke-width="1"/></svg>
<div class="a" style="left:0px;top:813px;width:1500px;height:6px;background:#14110e;"></div>
<div class="a" style="left:37px;top:813px;width:269px;height:6px;background:#efeeed;"></div>
<div class="a" style="left:690px;top:813px;width:38px;height:6px;background:#4a4542;"></div>
<div class="a" style="left:1418px;top:817px;width:1px;height:2px;background:#bbb;"></div>
<div class="a" style="left:1423px;top:817px;width:7px;height:2px;background:#888;"></div>
<div class="a" style="left:1436px;top:817px;width:14px;height:2px;background:#999;"></div>
<div class="a" style="left:1496px;top:813px;width:1px;height:6px;background:#666;"></div>
</body></html>
